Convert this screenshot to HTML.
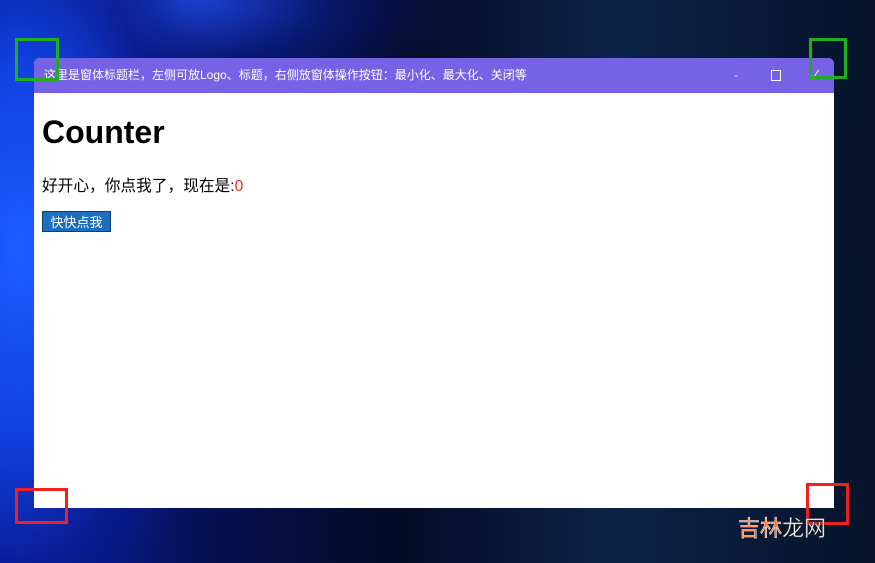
<!DOCTYPE html>
<html><head><meta charset="utf-8"><style>
html,body{margin:0;padding:0;width:875px;height:563px;overflow:hidden;font-family:"Liberation Sans","Noto Sans CJK SC",sans-serif}
body{position:relative;background:#06132a;}
.bg{position:absolute;inset:0;background:
radial-gradient(ellipse 200px 420px at 20px 250px,#1e5cff 0%,#1040e0 45%,rgba(10,30,150,0.7) 75%,rgba(6,19,42,0) 100%),
radial-gradient(ellipse 260px 120px at 200px 0px,#1a40d0 0%,rgba(10,30,140,0.6) 50%,rgba(6,19,42,0) 100%),
linear-gradient(90deg,#0a1aa0 0%,#061050 25%,#050a25 45%,#0d2248 70%,#06132a 100%);}
.win{position:absolute;left:34px;top:58px;width:800px;height:450px;background:#fff;border-radius:6px 6px 0 0;overflow:hidden}
.tb{height:35px;background:#7562e4;color:#fff;font-size:12px;line-height:35px;padding-left:10px;position:relative}
.ctl{position:absolute;top:0;color:#fff;font-size:12px}
h1{margin:0;position:absolute;left:8px;top:56px;font-size:32px;font-weight:bold;color:#000}
p{position:absolute;left:8px;top:115px;margin:0;font-size:15.7px}
button{position:absolute;left:8px;top:153px;height:21px;width:69px;padding:0;background:#1c6fbf;color:#fff;border:1px solid #0d3c70;font-size:13px;font-family:inherit}
.box{position:absolute;border:3px solid;box-sizing:border-box}
.wm{position:absolute;left:738px;top:511px;font-size:22px;font-family:"Noto Sans CJK SC",sans-serif;color:#ff6a2a;-webkit-text-stroke:0.5px #fff}
</style></head><body>
<div class="bg"></div>
<div class="win">
<div class="tb">这里是窗体标题栏，左侧可放Logo、标题，右侧放窗体操作按钮：最小化、最大化、关闭等
<span class="ctl" style="left:700px">-</span>
<span style="position:absolute;left:737px;top:12px;width:8px;height:9px;border:1px solid #fff"></span>
<span class="ctl" style="left:777px">✓</span></div>
<h1>Counter</h1>
<p>好开心，你点我了，现在是:<span style="color:#f22">0</span></p>
<button>快快点我</button>
</div>
<div class="box" style="left:15px;top:38px;width:44px;height:43px;border-color:#1fae1f"></div>
<div class="box" style="left:809px;top:38px;width:38px;height:41px;border-color:#1fae1f"></div>
<div class="box" style="left:15px;top:488px;width:53px;height:36px;border-color:#f21f1f"></div>
<div class="box" style="left:806px;top:483px;width:43px;height:42px;border-color:#f21f1f"></div>
<div class="wm">吉林<span style="color:#fff;-webkit-text-stroke:0.5px #333">龙网</span></div>
</body></html>
